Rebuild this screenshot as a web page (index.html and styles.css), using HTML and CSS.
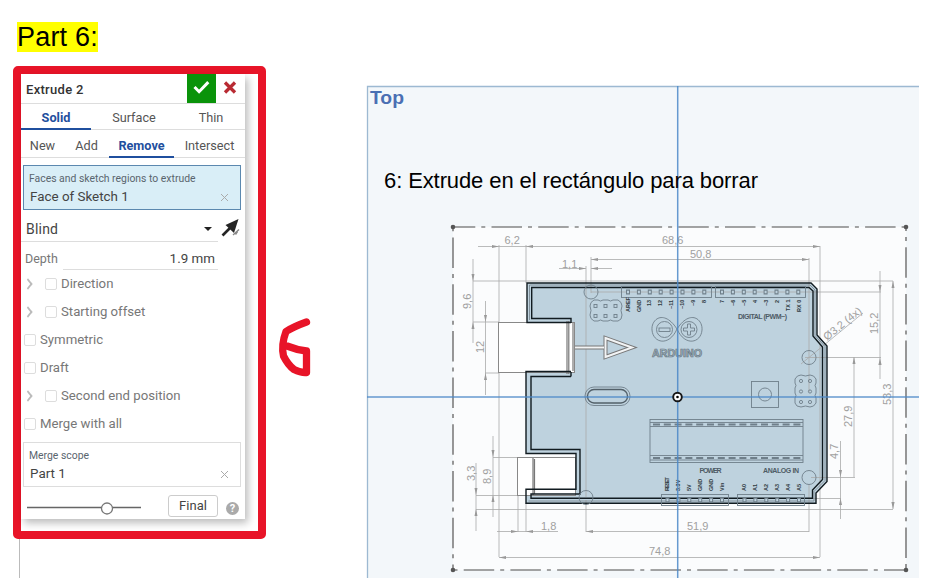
FILE: index.html
```
<!DOCTYPE html>
<html lang="es">
<head>
<meta charset="utf-8">
<title>Extrude</title>
<link rel="stylesheet" href="styles.css">
</head>
<body>
<main class="page">
  <section class="left">
    <h1 class="title"><mark>Part 6:</mark></h1>
    <div class="row">
      <div class="frame">
        <div class="panel">
          <header class="head"><span class="name">Extrude 2</span>
            <span class="ok"><svg width="29" height="29" viewBox="0 0 29 29"><path d="M7.5 13l4.600 4.700 9.200-9.600" fill="none" stroke="#fff" stroke-width="3"/></svg></span>
            <svg class="no" width="27" height="29" viewBox="0 0 27 29"><path d="M9 8.500l10 10M19 8.500l-10 10" stroke="#b92b33" stroke-width="3.300"/></svg>
          </header>
          <nav class="tabs one"><span class="on">Solid</span><span>Surface</span><span>Thin</span></nav>
          <nav class="tabs two"><span>New</span><span>Add</span><span class="on">Remove</span><span>Intersect</span></nav>
          <div class="box active"><small>Faces and sketch regions to extrude</small><p><span>Face of Sketch 1</span><svg class="x" width="9" height="9" viewBox="0 0 9 9"><path d="M1 1l7 7M8 1l-7 7"/></svg></p></div>
          <div class="type"><div class="select"><span>Blind</span><i class="caret"></i></div>
            <svg width="20" height="22" viewBox="0 0 20 22"><path d="M1.500 19.500L9 12" stroke="#252525" stroke-width="2.600"/><path d="M17.500 3L4.500 9l8.500 8z" fill="#252525"/><path d="M12 19l6-5.500M14.500 18.500l2-3" stroke="#888" stroke-width="1.400"/></svg>
          </div>
          <div class="depth"><label>Depth</label><output>1.9 mm</output></div>
          <div class="opt"><i class="chev"></i><i class="check"></i><span>Direction</span></div>
          <div class="opt"><i class="chev"></i><i class="check"></i><span>Starting offset</span></div>
          <div class="opt"><i class="check"></i><span>Symmetric</span></div>
          <div class="opt"><i class="check"></i><span>Draft</span></div>
          <div class="opt"><i class="chev"></i><i class="check"></i><span>Second end position</span></div>
          <div class="opt"><i class="check"></i><span>Merge with all</span></div>
          <div class="box"><small>Merge scope</small><p><span>Part 1</span><svg class="x" width="9" height="9" viewBox="0 0 9 9"><path d="M1 1l7 7M8 1l-7 7"/></svg></p></div>
          <footer class="foot">
            <svg width="116" height="16" viewBox="0 0 116 16"><path d="M1 7.500h114" stroke="#666" stroke-width="1.700"/><circle cx="81" cy="8.500" r="5.500" fill="#fff" stroke="#777" stroke-width="1.300"/></svg>
            <span class="final">Final</span><b class="help">?</b>
          </footer>
        </div>
      </div>
      <svg class="six" width="40" height="66" viewBox="0 0 40 66"><path d="M29.500 8Q17 12.500 9 17.500Q4 31 6.500 42Q11 51 17 55.500Q24 59 29.500 58.500V37Q20 36 10 32" fill="none" stroke="#e81428" stroke-width="7.300" stroke-linecap="round" stroke-linejoin="round"/></svg>
    </div>
    <div class="rule"></div>
  </section>
  <section class="plane">
    <svg width="553" height="493" viewBox="366 85 553 493">
      <defs>
        <marker id="a" viewBox="0 0 7 4" refX="7" refY="2" markerWidth="7" markerHeight="4" markerUnits="userSpaceOnUse" orient="auto-start-reverse"><path d="M0 .4L7 2 0 3.600z"/></marker>
        <g id="hdr"><path d="M4 0H8Q10.500 2 13 0H18Q20.500 2 23 0H28Q32 2 32 6Q30 10.500 32 15Q32 20 28 21H23Q20.500 19 18 21H13Q10.500 19 8 21H4Q0 19 0 15Q2 10.500 0 6Q0 2 4 0z"/></g>
      </defs>
      <path class="bg" d="M367.500 580V86.500H921V580z"/>
      <rect x="453" y="227" width="453" height="343" fill="#fff" fill-opacity=".65"/>
      <g class="border"><path d="M453 227H906" stroke-dasharray="30.500 6 4 6.200" stroke-dashoffset="8.200"/><path d="M453 227V570" stroke-dasharray="30.500 6 4 6.200" stroke-dashoffset="36.200"/><path d="M906 227V570" stroke-dasharray="30.500 6 4 6.200" stroke-dashoffset="26.500"/><path d="M453 570H906" stroke-dasharray="30.500 6 4 6.200" stroke-dashoffset="36"/></g>
      <g fill="#555"><circle cx="453" cy="227" r="2.300"/><circle cx="906" cy="227" r="2.300"/><circle cx="453" cy="570" r="2.300"/><circle cx="906" cy="570" r="2.300"/></g>
      <path class="board" d="M527 283H811L817 289V335L827 346V481.500L816 493V503.300H526V489.300H576V453.500H526V371.500H571V322.500H527z"/>
      <g class="dims"><path d="M499 245V557M526 245V283M820 246V557M473 281H893M473 322H499M485 373H499M591 257V293M586 266V497M809 258V392M805 357.500H881M591 292H881M493 457.500H526M476 495.500H526M476 509.500H893M518 457V532M526 503V532M586 500V532M809 484V532M811 477.500H855M811 498.500H841"/>
      <path d="M478 246.500H499M559 268.500H586M612 268.500H591M473 259V281M473 343V322M485.500 301V322M485.500 395V373M493 436V457M493 517V495M476 463V495M476 531V509M497 531.500H518M558 531.500H526M840.500 441V477M840.500 519V498M880 271V292M880 379V358" marker-end="url(#a)"/>
      <path d="M526 246.500H820M591 259.500H809M499 557.500H820M586 531.500H809M854 357V477M893 281V509" marker-start="url(#a)" marker-end="url(#a)"/>
      <!-- paths with many subpaths only place an end marker on the last one, so the remaining arrowheads are listed here -->
      <path class="heads" d="M492 245l7 1.500-7 1.500zM579 267l7 1.500-7 1.500zM598 267l-7 1.500 7 1.500zM471.500 274l1.500 7 1.500-7zM471.500 329l1.500-7 1.500 7zM484 315l1.500 7 1.500-7zM484 380l1.500-7 1.500 7zM491.500 450l1.500 7 1.500-7zM491.500 502l1.500-7 1.500 7zM474.500 488l1.500 7 1.500-7zM474.500 516l1.500-7 1.500 7zM511 530l7 1.500-7 1.500zM533 530l-7 1.500 7 1.500zM839 470l1.500 7 1.500-7zM839 505l1.500-7 1.500 7zM878.500 285l1.500 7 1.500-7zM813 245l7 1.500-7 1.500zM802 258l7 1.500-7 1.500zM598 258l-7 1.500 7 1.500zM813 556l7 1.500-7 1.500zM506 556l-7 1.500 7 1.500zM593 530l-7 1.500 7 1.500zM852.500 364l1.500-7 1.500 7zM891.500 288l1.500-7 1.500 7z"/>
      <path d="M473 281V322M485.500 322V373M493 457V495M476 495V509M880 292V358M840.500 477V498M499 246.500H526M518 531.500H526M801 364L863 313"/></g>
      <g class="nums"><text x="504.500" y="244">6,2</text><text x="662" y="244">68,6</text><text x="690" y="258">50,8</text><text x="562" y="267.500">1,1</text><text x="541" y="530">1,8</text><text x="687" y="530">51,9</text><text x="649" y="555">74,8</text>
      <text transform="translate(471 309) rotate(-90)">9,6</text><text transform="translate(484 353) rotate(-90)">12</text><text transform="translate(475 481) rotate(-90)">3,3</text><text transform="translate(491 484) rotate(-90)">8,9</text><text transform="translate(878 334) rotate(-90)">15,2</text><text transform="translate(891 405) rotate(-90)">53,3</text><text transform="translate(852 427) rotate(-90)">27,9</text><text transform="translate(838 459) rotate(-90)">4,7</text><text transform="translate(827 341) rotate(-39)">Ø3,2 (4x)</text></g>
      <g class="ports"><rect x="498.500" y="322.500" width="76" height="50"/><rect x="517.500" y="457.500" width="58" height="38"/></g>
      <path d="M567 321V374M568.800 321V374M573 323V371M533 458V495M534.500 459V494" stroke="#777" stroke-width="1.200"/>
      <g class="outline"><path d="M571 322.500H527V283H811L817 289V335L827 346V481.500L816 493V503.300H526V489.300H576V453.500H526V371.500H571"/><path d="M571 376.500V372M571 323V318.500H531.700V287.500H809L813 291V336L822.500 347V479.500L812.500 490V498.300H531V494H580V449.500H531V376.500H571"/></g>
      <path d="M529.500 320V285H810L815 290V335.500L825 346.500V480.500L814 491.500V501H528.500" fill="none" stroke="#73828b" stroke-width=".8"/>
      <g class="parts"><circle cx="591" cy="292" r="7"/><circle cx="809" cy="357.500" r="7"/><circle cx="586" cy="497.500" r="7"/><circle cx="809" cy="477.500" r="7"/>
      <use href="#hdr" x="590" y="300"/><use href="#hdr" transform="translate(816 375) rotate(90)"/>
      <rect x="621.500" y="286.500" width="90" height="11"/><rect x="715.500" y="286.500" width="90" height="11"/><rect x="661.500" y="494.500" width="67" height="11"/><rect x="737.500" y="494.500" width="67" height="11"/>
      <path class="holes" d="M626 292H709M720 292H803.500M665.500 500H728M742.500 500H804"/><path class="cores" d="M627 292H709M721 292H803M666.500 500H728M743.500 500H803"/>
      <g class="pads"><rect x="594" y="304.500" width="3" height="3"/><rect x="604" y="304.500" width="3" height="3"/><rect x="614" y="304.500" width="3" height="3"/><rect x="594" y="314.500" width="3" height="3"/><rect x="604" y="314.500" width="3" height="3"/><rect x="614" y="314.500" width="3" height="3"/><circle cx="801" cy="381" r="1.600"/><circle cx="810" cy="381" r="1.600"/><circle cx="801" cy="391.500" r="1.600"/><circle cx="810" cy="391.500" r="1.600"/><circle cx="801" cy="402" r="1.600"/><circle cx="810" cy="402" r="1.600"/></g>
      <rect x="751.500" y="381.500" width="27" height="26"/><circle cx="765" cy="394.500" r="6.500"/>
      <rect x="585" y="387" width="45" height="18.500" rx="9"/><rect x="587.500" y="389.500" width="40" height="13.500" rx="6.500" class="thick"/>
      <g class="chip"><rect x="650" y="419.500" width="153" height="43"/><path d="M650 422.500H803M650 426.500H803M650 455.500H803M650 460H803"/><path d="M653 424.500H803M653 458H803" stroke-width="2" stroke-dasharray="7 3.800"/></g>
      <path d="M677 329C664 309 651 319 652 330C653 343 669 347 677 329C690 309 703 319 702 330C701 343 685 347 677 329z"/><circle cx="664.500" cy="329.500" r="8"/><circle cx="689" cy="329.500" r="8"/><rect x="659" y="328" width="11" height="3.500"/><path d="M687.500 324h3v4h4v3h-4v4h-3v-4h-4v-3h4z"/></g>
      <g fill="none"><path d="M575 347.500H605" stroke="#777" stroke-width="4"/><path d="M605.500 338V357L632 347.500z" stroke="#777" stroke-width="4"/><path d="M575 347.500H604" stroke="#f2f4f5" stroke-width="2"/><path d="M605.500 338V357L632 347.500z" stroke="#f2f4f5" stroke-width="2"/></g>
      <g class="silk"><text class="brand" x="652" y="357" textLength="50" lengthAdjust="spacingAndGlyphs">ARDUINO</text><text x="738" y="319" textLength="49">DIGITAL (PWM~)</text><text x="699.500" y="473" textLength="22">POWER</text><text x="763" y="473" textLength="36">ANALOG IN</text></g>
      <g class="pin">
      <text transform="translate(629.500 312) rotate(-90)">AREF</text><text transform="translate(640.500 312) rotate(-90)">GND</text><text transform="translate(651 306) rotate(-90)">13</text><text transform="translate(662 306) rotate(-90)">12</text><text transform="translate(673 309) rotate(-90)">~11</text><text transform="translate(684 309) rotate(-90)">~10</text><text transform="translate(695 306) rotate(-90)">~9</text><text transform="translate(706 303) rotate(-90)">8</text><text transform="translate(724 303) rotate(-90)">7</text><text transform="translate(735 306) rotate(-90)">~6</text><text transform="translate(746 306) rotate(-90)">~5</text><text transform="translate(757 303) rotate(-90)">4</text><text transform="translate(768 306) rotate(-90)">~3</text><text transform="translate(779 303) rotate(-90)">2</text><text transform="translate(790 311) rotate(-90)">TX 1</text><text transform="translate(801 312) rotate(-90)">RX 0</text>
      <text transform="translate(669 491) rotate(-90)" textLength="14">RESET</text><text transform="translate(680 491) rotate(-90)">3.3V</text><text transform="translate(691 491) rotate(-90)">5V</text><text transform="translate(702 491) rotate(-90)">GND</text><text transform="translate(713 491) rotate(-90)">GND</text><text transform="translate(724 491) rotate(-90)">Vin</text><text transform="translate(746 491) rotate(-90)">A0</text><text transform="translate(757 491) rotate(-90)">A1</text><text transform="translate(768 491) rotate(-90)">A2</text><text transform="translate(779 491) rotate(-90)">A3</text><text transform="translate(790 491) rotate(-90)">A4</text><text transform="translate(801 491) rotate(-90)">A5</text></g>
      <path d="M367 397H919M677.700 86V578" stroke="#4b88c8" stroke-width="1.500" stroke-opacity=".85"/>
      <circle cx="677.500" cy="397" r="4.300" fill="#fff" stroke="#151515" stroke-width="1.900"/><circle cx="677.500" cy="397" r="1.300"/>
      <text class="top" x="370" y="104" textLength="34" lengthAdjust="spacingAndGlyphs">Top</text><text class="note" x="384" y="188" textLength="374">6: Extrude en el rectángulo para borrar</text>
    </svg>
  </section>
</main>
</body>
</html>
```
FILE: styles.css
```
* { box-sizing: border-box; }
body { margin: 0; background: #fff; overflow: hidden; }
.page { display: flex; width: 930px; height: 578px; }
.left { width: 366px; padding-left: 13px; display: flex; flex-direction: column; }
.title { margin: 22px 0 0 4px; height: 44px; font: 27px/30px "Liberation Sans", sans-serif; letter-spacing: .2px; }
.title mark { display: inline-block; background: #ff0; color: #000; }
.row { display: flex; align-items: flex-start; }
.frame { width: 253px; height: 473px; border: 8px solid #e81428; border-radius: 5px; }
.panel { width: 224px; height: 445px; background: #fff; box-shadow: 3px 4px 8px #0004; font: 14px/20px Roboto, sans-serif; color: #444; }
.six { margin: 248px 0 0 11px; }
.rule { width: 1px; flex: 1; margin-left: 6px; background: #bbb; }
.head { display: flex; height: 30px; border-bottom: 1px solid #ddd; padding-left: 5px; }
.name { font-weight: 500; font-size: 13px; line-height: 31px; flex: 1; color: #333; letter-spacing: .3px; }
.ok { width: 29px; height: 29px; background: #0a930a; }
.no { margin-right: 2px; }
.tabs { display: grid; border-bottom: 1px solid #ddd; font-size: 12.7px; text-align: center; color: #555; }
.one { height: 26px; grid-template: 26px / 70px 86px 68px; line-height: 27px; }
.two { height: 28px; grid-template: 28px / 43px 45px 65px 71px; line-height: 32px; }
.tabs .on { color: #1f4f9e; font-weight: 700; border-bottom: 2px solid #1f4f9e; }
.box { margin: 4px 0 0 2px; width: 218px; height: 45px; border: 1px solid #ddd; padding: 3px 11px 0 5px; }
.active { margin-top: 7px; background: #d9eef7; border-color: #5b88af; }
.box small { display: block; font-size: 10.4px; line-height: 19px; color: #59656e; }
.box p { margin: -1px 0 0; display: flex; justify-content: space-between; align-items: center; padding-left: 1px; font-size: 13.4px; }
.x path { stroke: #aaa; stroke-width: 1; }
.type { display: flex; height: 26px; margin-top: 6px; }
.select { width: 197px; margin-right: 3px; padding: 0 6px 0 5px; border-bottom: 1px solid #ddd; display: flex; justify-content: space-between; align-items: center; letter-spacing: .2px; }
.caret { border: 4px solid transparent; border-top: 4px solid #222; border-bottom: 0; }
.depth { display: flex; height: 28px; padding: 6px 27px 0 4px; line-height: 22px; }
.depth label { width: 38px; color: #777; font-size: 12.5px; }
.depth output { flex: 1; text-align: right; border-bottom: 1px solid #ddd; padding-right: 3px; font-size: 13.4px; }
.opt { display: flex; height: 28px; align-items: center; padding-left: 3px; color: #777; font-size: 13.2px; }
.chev { width: 8px; height: 8px; margin: 0 11px 0 0; border: solid #bbb; border-width: 2px 2px 0 0; transform: scaleX(.8) rotate(45deg); }
.chev + .check { margin-left: 2px; }
.check { width: 12px; height: 12px; border: 1px solid #ddd; border-radius: 2px; margin-right: 4px; }
.foot { display: flex; height: 32px; padding: 8px 0 0 5px; }
.foot svg { margin-top: 5px; }
.final { margin: 0 15px 0 26px; width: 50px; height: 22px; border: 1px solid #ccc; border-radius: 3px; text-align: center; font-size: 13px; line-height: 19px; }
.help { width: 13px; height: 13px; border-radius: 50%; margin-top: 7px; margin-left: -7px; background: #aaa; color: #fff; text-align: center; font-size: 11px; line-height: 13px; }
.plane { padding-top: 85px; }
.plane > svg { display: block; }
.bg { fill: #f3f7fa; stroke: #9db9d2; stroke-width: 1.3; }
.border path { fill: none; stroke: #858585; stroke-width: 1.7; }
.board { fill: #bed2de; }
.dims path { stroke: #aaa; stroke-width: .8; fill: none; }
.dims .heads, #a path { fill: #999; stroke: none; }
.nums { font: 11px "Liberation Sans", sans-serif; fill: #a0a0a0; }
.ports rect { fill: #fff; stroke: #888; }
.outline path { fill: none; stroke: #111b20; stroke-width: 1.4; }
.parts { fill: none; stroke: #6f7f8a; stroke-width: .9; }
.parts .holes { stroke-width: 5; stroke-dasharray: 4 6.9; }
.parts .cores { stroke: #bed2de; stroke-width: 2.4; stroke-dasharray: 2 8.9; }
.parts .thick { stroke: #53616a; stroke-width: 1.4; }
.silk { font: bold 7px "Liberation Sans", sans-serif; fill: #4e5c66; }
.silk .brand { font-size: 11px; fill: #a5b8c4; stroke: #66757f; stroke-width: .7; }
.pin { font: bold 5.5px "Liberation Sans", sans-serif; fill: #2f3a42; }
.top { font: bold 19px "Liberation Sans", sans-serif; fill: #4a6fb3; }
.note { font: 22px "Liberation Sans", sans-serif; fill: #000; }
```
